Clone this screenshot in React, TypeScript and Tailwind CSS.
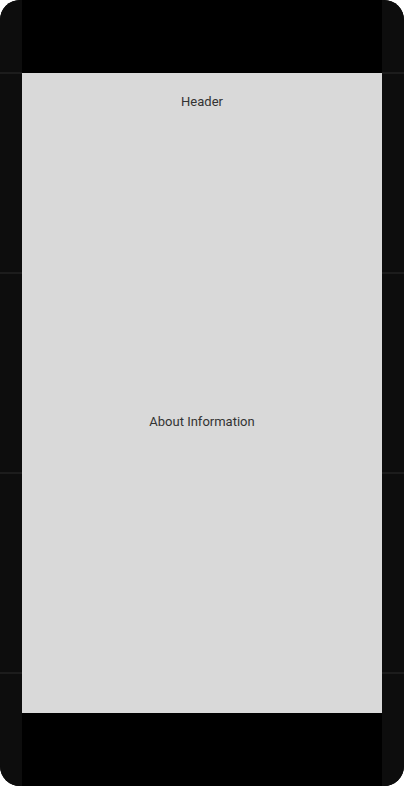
const font = { fontFamily: "Roboto, 'Liberation Sans', sans-serif" };

function SideStrip() {
  return (
    <div className="flex w-[22px] flex-col bg-[#0d0d0d]">
      <div className="h-[72px]" />
      <div className="h-[2px] bg-[#1c1c1c]" />
      <div className="h-[198px]" />
      <div className="h-[2px] bg-[#1c1c1c]" />
      <div className="h-[198px]" />
      <div className="h-[2px] bg-[#1c1c1c]" />
      <div className="h-[198px]" />
      <div className="h-[2px] bg-[#1c1c1c]" />
      <div className="flex-1" />
    </div>
  );
}

export default function App() {
  return (
    <div className="h-[786px] w-[404px] bg-white">
      <div className="flex h-full w-full overflow-hidden rounded-[20px] bg-black">
        <SideStrip />
        <div className="flex w-[360px] flex-col">
          <div className="h-[73px] bg-black" />
          <div className="flex h-[640px] flex-col bg-[#d9d9d9] pt-px text-[13px] text-[#333333]" style={font}>
            <div className="flex h-[56px] items-center justify-center">Header</div>
            <div className="flex flex-1 items-center justify-center">About Information</div>
          </div>
          <div className="flex-1 bg-black" />
        </div>
        <SideStrip />
      </div>
    </div>
  );
}
